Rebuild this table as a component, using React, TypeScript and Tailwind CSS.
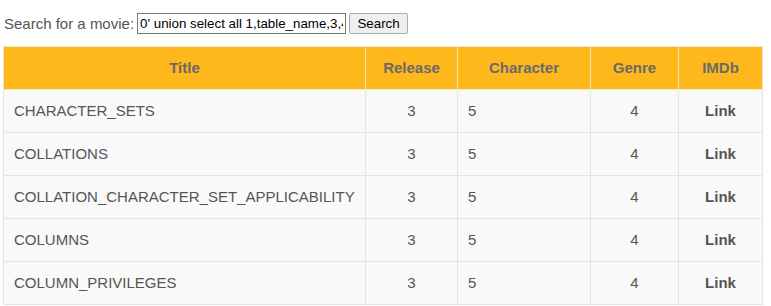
import React from 'react';

const rows = [
  'CHARACTER_SETS',
  'COLLATIONS',
  'COLLATION_CHARACTER_SET_APPLICABILITY',
  'COLUMNS',
  'COLUMN_PRIVILEGES',
];

export default function App() {
  return (
    <div className="min-h-screen bg-white text-[15px] text-[#555] font-['Liberation_Sans',Arial,sans-serif]">
      {/* search form */}
      <form className="flex items-center pl-[4px] pt-[13px]" onSubmit={(e) => e.preventDefault()}>
        <label className="mr-[3px] text-[15px] leading-[21px] text-[#555]">Search for a movie:</label>
        <input
          type="text"
          defaultValue="0' union select all 1,table_name,3,4,5 from information_schema.tables"
          className="h-[21px] w-[209px] border border-[#767676] bg-white px-[2px] text-[13.333px] text-black outline-none"
        />
        <button
          type="submit"
          className="ml-[3px] h-[21px] w-[59px] rounded-[2px] border border-[#adadad] bg-[#efefef] text-[13.333px] text-black"
        >
          Search
        </button>
      </form>

      <table className="mt-[12px] ml-[3px] w-[759px] table-fixed border-collapse border border-[#e4e4e4]">
        <colgroup>
          <col className="w-[362px]" />
          <col className="w-[92px]" />
          <col className="w-[133px]" />
          <col className="w-[88px]" />
          <col className="w-[84px]" />
        </colgroup>
        <thead>
          <tr className="h-[43px] bg-[#ffb81c] text-[#6a6a6a] font-bold">
            <th className="border border-[#f2e6c8] text-center">Title</th>
            <th className="border border-[#f2e6c8] text-center">Release</th>
            <th className="border border-[#f2e6c8] text-center">Character</th>
            <th className="border border-[#f2e6c8] text-center">Genre</th>
            <th className="border border-[#f2e6c8] text-center">IMDb</th>
          </tr>
        </thead>
        <tbody>
          {rows.map((title) => (
            <tr key={title} className="h-[43px] bg-[#f9f9f9]">
              <td className="border border-[#e4e4e4] px-[10px]">{title}</td>
              <td className="border border-[#e4e4e4] text-center">3</td>
              <td className="border border-[#e4e4e4] px-[10px]">5</td>
              <td className="border border-[#e4e4e4] text-center">4</td>
              <td className="border border-[#e4e4e4] text-center">
                <a href="#" className="font-bold text-[#555]">Link</a>
              </td>
            </tr>
          ))}
        </tbody>
      </table>
    </div>
  );
}
